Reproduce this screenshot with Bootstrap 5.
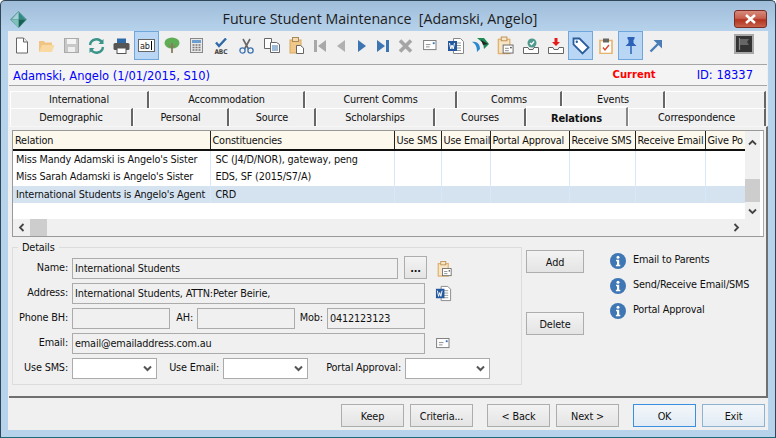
<!DOCTYPE html>
<html lang="en">
<head>
<meta charset="utf-8">
<title>Future Student Maintenance</title>
<link rel="stylesheet" href="https://cdn.jsdelivr.net/npm/bootstrap@5.3.0/dist/css/bootstrap.min.css">
<style>
html,body{margin:0;padding:0;background:#fff;overflow:hidden}
body{font-family:"DejaVu Sans",sans-serif;font-stretch:condensed;font-size:10.8px;letter-spacing:-.16px;line-height:1;color:#111}
.win{width:776px;height:438px;border:1px solid #2e4658;border-bottom-color:#1f6a78;border-radius:5px 5px 0 0;background:linear-gradient(#9fbcd9 0,#b7d3ec 31px);padding:0 7px 7px;box-sizing:border-box}
.ttl{height:30px;position:relative}
.ttl-txt{font-family:"Open Sans",sans-serif;font-stretch:normal;letter-spacing:0;font-size:14.2px;color:#1c1c1c;white-space:pre;padding-top:11px;padding-right:16px}
.ttl-ico{left:2px;top:10px;position:absolute}
.cls{position:absolute;right:1px;top:9px;width:33px;height:18px;border:1px solid #7c2c22;border-radius:3px;background:linear-gradient(#d68a7c 0,#c9604e 45%,#b0341f 55%,#c8624c 100%)}
.client{background:#f0f0f0;height:399px;display:flex;flex-direction:column}
.tbar{height:33px;padding-left:1px}
.tb{width:25px;height:29px;display:flex;align-items:center;justify-content:center;flex:none;margin-top:0;border:1px solid transparent}
.tb-nar{width:21px}
.tb-on{background:#b9d7f4;border-color:#6fa6dc}
.flagbox{margin:3px 14px 0 auto;width:20px;height:20px;border:2px solid #a8a8a8;background:#333;display:flex;align-items:center;justify-content:center}
.nbar{height:22px;margin:0 1px;border:1px solid #a5a5a5;border-width:1px 0;background:#f4f4f4;padding:0 14px 0 4px;font-size:11.5px;font-stretch:normal;letter-spacing:0;color:#0000ff}
.nnm{padding-top:3px}
.nid{padding-top:2px}
.cur{color:#ff0000;font-weight:700;font-size:10px;margin-right:41px}
.tabs{margin:5px 2px 0;flex-wrap:nowrap}
.tabs .nav-item{flex:none;height:100%}
.tabrow1{height:17px}
.tabrow2{height:18px}
.tl{display:block;height:100%;padding:3px 0 0;text-align:center;color:#111;text-decoration:none;background:#f0f0f0;border-top:1px solid #fff;border-left:1px solid #fff;border-right:2px solid #666;border-radius:0}
.tabrow2 .tl{padding-top:4px}
.tl:hover{color:#111}
.tabrow2 .tl-on{font-weight:700;font-size:11px;background:#f0f0f0;border-right-color:#888;margin-top:-1px;height:19px;padding-top:5px;box-shadow:0 -1px 0 #fff}
.pan{height:272px;margin:0 0 0 1px;border:1px solid #888;border-width:1px 2px 2px 0;border-color:#f6f6f6 #707070 #707070 #f6f6f6;padding:3px 2px 0 3px}
.grid{height:107px;border:1px solid #999;border-right-color:#aaa;background:#fff;display:flex}
.gl{width:732px;flex:none;display:flex;flex-direction:column}
.gt{flex:1 1 auto;overflow:hidden;background:#fff}
.gtab{table-layout:fixed;width:745px;margin:0;border-collapse:collapse}
.gtab th,.gtab td{padding:0 0 0 3px;font-weight:400;white-space:nowrap;overflow:hidden;color:#111;background:transparent;box-shadow:none;border:0}
.gtab th{height:19px;background:#fdf8ec;border-right:1px solid #222;border-bottom:2px solid #111;vertical-align:middle;padding-left:2px;padding-top:2px}
.gtab td{height:18px;border-right:1px solid #d9e8f8;vertical-align:middle;padding-top:1px}
.gtab td.cc{padding-left:5px}
.gtab tr.sel td{background:#d5e3f1;height:17px}
.hs{height:17px;background:#f0f0f0;display:flex;align-items:center;flex:none}
.sb-a{width:17px;flex:none;display:flex;align-items:center;justify-content:center}
.hth{width:17px;height:17px;background:#cdcdcd;flex:none}
.vs{width:15px;background:#f0f0f0;flex:none;display:flex;flex-direction:column;align-items:center;margin-right:3px}
.vth{width:15px;height:23px;background:#cdcdcd;margin-top:33px}
.low{display:flex;margin-top:3px}
.fs{width:510px;height:143px;border:1px solid #dcdcdc!important;margin-left:0!important;margin-top:2px!important;padding:0!important}
.fs legend{float:none;width:auto;font-size:inherit;margin:-6px 0 5px 5px;padding:0 4px;line-height:11px;height:11px;display:block}
.fr{display:flex;align-items:center}
.fl{width:55px;text-align:right;margin-right:4px;flex:none;white-space:nowrap}
.fi{height:21px;padding:0 2px;font-size:10.8px;letter-spacing:-.16px;line-height:1;border:1px solid #ababab;border-radius:0;background:#f0f0f0;color:#111;flex:none;font-family:inherit;font-stretch:condensed;box-shadow:none}
.fi:disabled,.fi[readonly]{background:#f0f0f0}
.fsel{height:21px;padding:0;border:1px solid #ababab;border-radius:0;background-color:#fff;background-image:url("data:image/svg+xml,%3Csvg xmlns='http://www.w3.org/2000/svg' viewBox='0 0 9 7'%3E%3Cpath d='M1 1.500L4.500 5 8 1.500' fill='none' stroke='%23555' stroke-width='2'/%3E%3C/svg%3E");background-size:9px 7px;background-position:right 4px center;flex:none;box-shadow:none}
.wbtn{font-size:10.8px;letter-spacing:-.16px;line-height:1;color:#111;border:1px solid #adadad;border-radius:0;background:linear-gradient(#f3f3f3,#e4e4e4);padding:3px 0 0;display:block;font-family:inherit;font-stretch:condensed}
.wbtn:hover{color:#111;border-color:#adadad;background:#e8e8e8}
.side{margin-left:4px;width:58px;flex:none;padding-top:10px}
.info{margin-left:26px;padding-top:8px}
.iline{height:25px;white-space:nowrap}
.iline svg{margin-right:7px}
.foot{height:32px;padding:6px 3px 0 0;gap:6px}
.fb{width:63px;height:23px}
.fb-ok{border-color:#3b8fe0;background:linear-gradient(#f2f6fa,#e2ecf5)}
.fb-ex{border-color:#8fb2cf;background:linear-gradient(#f2f6fa,#e2ecf5)}
.g8{margin-left:8px}
</style>
</head>
<body>
<svg width="0" height="0" class="d-block" aria-hidden="true">
<defs>
<symbol id="env" viewBox="0 0 16 12"><rect x=".5" y=".5" width="13.5" height="10" fill="#fff" stroke="#777"/><path d="M3 5h5M3 7.5h4" stroke="#888"/><rect x="10.5" y="2.5" width="2" height="2" fill="#3d6fb0"/></symbol>
<symbol id="word" viewBox="0 0 18 18"><path d="M6.500 1.500h7l3 3v12h-10z" fill="#fff" stroke="#888"/><path d="M9 6h5M9 8.500h5M9 11h5M9 13.500h5" stroke="#999"/><rect x="1" y="4" width="9" height="10" fill="#23589f"/><path d="M2.500 6l1.300 6 1.200-4 1.200 4 1.300-6" stroke="#fff" fill="none" stroke-width="1"/></symbol>
<symbol id="clipenv" viewBox="0 0 18 20"><rect x="1.500" y="3.500" width="12" height="15" fill="#f6e5c6" stroke="#e0b36f" stroke-width="1.500"/><rect x="4.500" y="1" width="6" height="4" fill="#f6e5c6" stroke="#bb8f55"/><rect x="6.500" y="9.500" width="10.500" height="8.500" fill="#fff" stroke="#666"/><path d="M8.500 13h4M8.500 15.500h4" stroke="#888"/><rect x="14" y="11.500" width="1.500" height="1.500" fill="#333"/></symbol>
<symbol id="inf" viewBox="0 0 16 16"><circle cx="8" cy="8" r="8" fill="#3f76b4"/><circle cx="8" cy="4.200" r="1.500" fill="#fff"/><path d="M6 6.800h3.200v5h1.100v1.400H5.900v-1.400h1.100V8.200H6z" fill="#fff"/></symbol>
</defs>
</svg>
<div class="win">
  <div class="ttl d-flex justify-content-center">
    <svg class="ttl-ico" width="17" height="17" viewBox="0 0 16 16"><path d="M8 0l8 8-8 8-8-8z" fill="#5c9c9c"/><path d="M8 1l6 6.500H8z" fill="#2e8a84"/><path d="M8 16l7-8H8z" fill="#166055"/><path d="M1 8l7 8V8z" fill="#7fc0b8"/><path d="M8 1L2 7.500h6z" fill="#a7cfd8"/></svg>
    <div class="ttl-txt">Future Student Maintenance  [Adamski, Angelo]</div>
    <div class="cls d-flex align-items-center justify-content-center"><svg width="13" height="10" viewBox="0 0 13 10"><path d="M2 1l9 8M11 1L2 9" stroke="#fff" stroke-width="2.500"/></svg></div>
  </div>
  <div class="client">
    <div class="tbar d-flex">
      <div class="tb"><svg width="14" height="17" viewBox="0 0 14 17"><path d="M1.500 1h7l4 4v11h-11z" fill="#fff" stroke="#666"/><path d="M8.500 1v4h4" fill="#eee" stroke="#666"/></svg></div>
      <div class="tb"><svg width="17" height="15" viewBox="0 0 17 15"><path d="M1 3h5l1 1.500h7V14H1z" fill="#f0c483"/><path d="M1 14l3-7h12.500L14 14z" fill="#f9d9a2"/></svg></div>
      <div class="tb"><svg width="15" height="15" viewBox="0 0 15 15"><rect x=".5" y=".5" width="14" height="14" fill="#c8c8c8" stroke="#aaa"/><rect x="3" y="1" width="9" height="5" fill="#f4f4f4"/><rect x="4" y="9" width="7" height="5" fill="#efefef"/></svg></div>
      <div class="tb"><svg width="17" height="16" viewBox="0 0 17 16"><path d="M2 7a6.500 6.500 0 0 1 12-2.500" fill="none" stroke="#3b9489" stroke-width="2.400"/><path d="M15.500 1v5h-5z" fill="#3b9489"/><path d="M15 9a6.500 6.500 0 0 1-12 2.500" fill="none" stroke="#3b9489" stroke-width="2.400"/><path d="M1.500 15v-5h5z" fill="#3b9489"/></svg></div>
      <div class="tb"><svg width="17" height="16" viewBox="0 0 17 16"><rect x="4" y="0.500" width="9" height="5" fill="#2f6aa8"/><rect x="0.500" y="5" width="16" height="7" rx="1.500" fill="#555"/><rect x="4" y="10" width="9" height="5.500" fill="#fff" stroke="#555"/></svg></div>
      <div class="tb tb-on"><svg width="17" height="13" viewBox="0 0 17 13"><rect x=".5" y=".5" width="16" height="12" fill="#fff" stroke="#666"/><text x="2" y="10" font-size="9" font-family="DejaVu Sans" fill="#222">ab</text><path d="M13.500 2v9" stroke="#000"/></svg></div>
      <div class="tb"><svg width="16" height="17" viewBox="0 0 16 17"><ellipse cx="8" cy="6" rx="7.500" ry="5.500" fill="#5fae55"/><path d="M8 6v10" stroke="#8a7a60" stroke-width="1.800"/><path d="M4.500 8l3.500 3 3.500-3" stroke="#8a7a60" fill="none"/></svg></div>
      <div class="tb"><svg width="13" height="15" viewBox="0 0 13 15"><rect x=".5" y=".5" width="12" height="14" fill="#e8e8e8" stroke="#888"/><rect x="2" y="2" width="9" height="3" fill="#6c9fd0"/><path d="M2.500 7h2M5.500 7h2M8.500 7h2M2.500 9.500h2M5.500 9.500h2M8.500 9.500h2M2.500 12h2M5.500 12h2M8.500 12h2" stroke="#777" stroke-width="1.400"/></svg></div>
      <div class="tb"><svg width="15" height="16" viewBox="0 0 15 16"><path d="M2 4.500l3 3.500 7-7.500" fill="none" stroke="#2f6aa8" stroke-width="2.400"/><text x=".5" y="15.500" font-size="6.500" font-weight="700" font-family="DejaVu Sans" fill="#444">ABC</text></svg></div>
      <div class="tb"><svg width="15" height="16" viewBox="0 0 15 16"><path d="M4 1l5.500 10M11 1L5.500 11" stroke="#666" stroke-width="1.600"/><circle cx="3.500" cy="12.500" r="2.600" fill="none" stroke="#3d74b2" stroke-width="1.300"/><circle cx="11.500" cy="12.500" r="2.600" fill="none" stroke="#3d74b2" stroke-width="1.300"/></svg></div>
      <div class="tb"><svg width="16" height="15" viewBox="0 0 16 15"><path d="M.5.500h7v10h-7z" fill="#fff" stroke="#666"/><path d="M6.500 4.500h6l3 2v8h-9z" fill="#fff" stroke="#666"/><path d="M8 8h6M8 10h6M8 12h6" stroke="#3d74b2"/></svg></div>
      <div class="tb"><svg width="16" height="17" viewBox="0 0 16 17"><rect x="1" y="3" width="11" height="13" fill="#f0c98a" stroke="#d8a860"/><rect x="3.500" y=".5" width="6" height="4" fill="#f3dcb2" stroke="#aa8855"/><path d="M7.500 8.500h4l3 2.500v5.500h-7z" fill="#fff" stroke="#666"/></svg></div>
      <div class="tb tb-nar"><svg width="12" height="12" viewBox="0 0 12 12"><rect width="3" height="12" fill="#a8a8a8"/><path d="M12 0v12L4 6z" fill="#a8a8a8"/></svg></div>
      <div class="tb tb-nar"><svg width="8" height="12" viewBox="0 0 8 12"><path d="M8 0v12L0 6z" fill="#b0b0b0"/></svg></div>
      <div class="tb tb-nar"><svg width="8" height="12" viewBox="0 0 8 12"><path d="M0 0v12l8-6z" fill="#3d74b2"/></svg></div>
      <div class="tb tb-nar"><svg width="12" height="12" viewBox="0 0 12 12"><path d="M0 0v12l8-6z" fill="#3d74b2"/><rect x="9" width="3" height="12" fill="#3d74b2"/></svg></div>
      <div class="tb"><svg width="15" height="14" viewBox="0 0 15 14"><path d="M2 1.500l11 11M13 1.500l-11 11" stroke="#a5a5a5" stroke-width="3.600"/></svg></div>
      <div class="tb"><svg width="15" height="11"><use href="#env"/></svg></div>
      <div class="tb"><svg width="18" height="18"><use href="#word"/></svg></div>
      <div class="tb"><svg width="17" height="15" viewBox="0 0 17 15"><path d="M0 4c5-1 8 2 8 7l-3 3c0-5-1-8-5-10z" fill="#2a8ad0"/><path d="M5 0h7l5 6-5 5-1-6z" fill="#1f8a55"/><path d="M9 2l7 4-5 1z" fill="#222"/></svg></div>
      <div class="tb"><svg width="17" height="19"><use href="#clipenv"/></svg></div>
      <div class="tb"><svg width="16" height="16" viewBox="0 0 16 16"><circle cx="9" cy="5" r="4.500" fill="#4f9a8e"/><path d="M7 5l1.500 1.500L11 3.500" stroke="#fff" fill="none" stroke-width="1.300"/><path d="M.5 9.500h4.500l1 2h4l1-2h4.500v6H.500z" fill="#fff" stroke="#666"/></svg></div>
      <div class="tb"><svg width="16" height="16" viewBox="0 0 16 16"><path d="M6.500 0h3v4h2.500l-4 4-4-4h2.500z" fill="#e31b1b"/><path d="M.5 9.500h4.500l1 2h4l1-2h4.500v6H.500z" fill="#fff" stroke="#666"/></svg></div>
      <div class="tb tb-on"><svg width="18" height="18" viewBox="0 0 18 18"><path d="M1.500 1.500h6l9 9-6 6-9-9z" fill="#fff" stroke="#2a5d9c" stroke-width="1.800"/><circle cx="4.800" cy="4.800" r="1.200" fill="#2a5d9c"/></svg></div>
      <div class="tb"><svg width="14" height="16" viewBox="0 0 14 16"><rect x="1" y="2.500" width="12" height="13" fill="#fff" stroke="#e5b56f" stroke-width="1.600"/><rect x="4" y=".5" width="6" height="4" fill="#666"/><path d="M4 9.500l2 2.500 4-5" stroke="#d9442b" fill="none" stroke-width="1.400"/></svg></div>
      <div class="tb tb-on"><svg width="12" height="17" viewBox="0 0 12 17"><path d="M2.500 0h7v2l-1 1v3l3 3H.5l3-3V3l-1-1z" fill="#2d62b8"/><path d="M6 9v8" stroke="#2d62b8" stroke-width="1.500"/></svg></div>
      <div class="tb"><svg width="14" height="14" viewBox="0 0 14 14"><path d="M1.500 12.500L11 3" stroke="#4a7db5" stroke-width="2.400"/><path d="M4.500 1H13v8.500z" fill="#4a7db5"/></svg></div>
      <div class="flagbox"><svg width="12" height="12" viewBox="0 0 12 12"><path d="M1.500 0v12" stroke="#888" stroke-width="1.200"/><path d="M2 1h9l-2 3 2 3H2z" fill="#666"/></svg></div>
    </div>
    <div class="nbar d-flex align-items-center"><span class="flex-grow-1 nnm">Adamski, Angelo (1/01/2015, S10)</span><span class="cur">Current</span><span class="nid">ID: 18337</span></div>

    <ul class="nav tabs tabrow1">
      <li class="nav-item"><a class="tl" style="width:139px">International</a></li>
      <li class="nav-item"><a class="tl" style="width:156px">Accommodation</a></li>
      <li class="nav-item"><a class="tl" style="width:152px">Current Comms</a></li>
      <li class="nav-item"><a class="tl" style="width:105px">Comms</a></li>
      <li class="nav-item"><a class="tl" style="width:103px">Events</a></li>
      <li class="nav-item"><a class="tl" style="width:101px">&nbsp;</a></li>
    </ul>
    <ul class="nav tabs tabrow2 mt-0">
      <li class="nav-item"><a class="tl" style="width:123px">Demographic</a></li>
      <li class="nav-item"><a class="tl" style="width:96px">Personal</a></li>
      <li class="nav-item"><a class="tl" style="width:87px">Source</a></li>
      <li class="nav-item"><a class="tl" style="width:119px">Scholarships</a></li>
      <li class="nav-item"><a class="tl" style="width:91px">Courses</a></li>
      <li class="nav-item"><a class="tl tl-on" style="width:102px">Relations</a></li>
      <li class="nav-item"><a class="tl" style="width:138px">Correspondence</a></li>
    </ul>

    <div class="pan">
      <div class="grid">
        <div class="gl">
          <div class="gt">
            <table class="table gtab">
              <colgroup><col style="width:197px"><col style="width:184px"><col style="width:47px"><col style="width:49px"><col style="width:79px"><col style="width:66px"><col style="width:70px"><col style="width:53px"></colgroup>
              <thead><tr><th>Relation</th><th>Constituencies</th><th>Use SMS</th><th>Use Email</th><th>Portal Approval</th><th>Receive SMS</th><th>Receive Email</th><th>Give Po</th></tr></thead>
              <tbody>
                <tr><td>Miss Mandy Adamski is Angelo's Sister</td><td class="cc">SC (J4/D/NOR), gateway, peng</td><td></td><td></td><td></td><td></td><td></td><td></td></tr>
                <tr><td>Miss Sarah Adamski is Angelo's Sister</td><td class="cc">EDS, SF (2015/S7/A)</td><td></td><td></td><td></td><td></td><td></td><td></td></tr>
                <tr class="sel"><td>International Students is Angelo's Agent</td><td class="cc">CRD</td><td></td><td></td><td></td><td></td><td></td><td></td></tr>
              </tbody>
            </table>
          </div>
          <div class="hs">
            <div class="sb-a"><svg width="7" height="9" viewBox="0 0 7 9"><path d="M5.500 1L2 4.500 5.500 8" fill="none" stroke="#444" stroke-width="1.800"/></svg></div>
            <div class="hth"></div>
            <div class="sb-a ms-auto"><svg width="7" height="9" viewBox="0 0 7 9"><path d="M1.500 1L5 4.500 1.500 8" fill="none" stroke="#444" stroke-width="1.800"/></svg></div>
          </div>
        </div>
        <div class="vs">
          <svg class="mt-2" width="9" height="7" viewBox="0 0 9 7"><path d="M1 5.500L4.500 2 8 5.500" fill="none" stroke="#444" stroke-width="1.800"/></svg>
          <div class="vth"></div>
          <svg style="margin-top:6px" width="9" height="7" viewBox="0 0 9 7"><path d="M1 1.500L4.500 5 8 1.500" fill="none" stroke="#444" stroke-width="1.800"/></svg>
        </div>
      </div>

      <div class="low">
        <fieldset class="fs">
          <legend>Details</legend>
          <div class="fr"><span class="fl">Name:</span><input class="form-control fi" style="width:326px" value="International Students" readonly><button type="button" class="btn wbtn" style="width:23px;height:23px;font-weight:700;margin-left:6px;margin-top:-2px">...</button><svg style="margin-left:10px" width="15" height="18"><use href="#clipenv"/></svg></div>
          <div class="fr" style="margin-top:4px"><span class="fl">Address:</span><input class="form-control fi" style="width:353px" value="International Students, ATTN:Peter Beirie," readonly><svg style="margin-left:10px" width="17" height="17"><use href="#word"/></svg></div>
          <div class="fr" style="margin-top:4px"><span class="fl">Phone BH:</span><input class="form-control fi" style="width:98px" readonly><span style="width:27px;text-align:right;padding-right:4px">AH:</span><input class="form-control fi" style="width:98px" readonly><span style="width:32px;text-align:right;padding-right:4px">Mob:</span><input class="form-control fi" style="width:98px" value="0412123123" readonly></div>
          <div class="fr" style="margin-top:4px"><span class="fl">Email:</span><input class="form-control fi" style="width:353px" value="email@emailaddress.com.au" readonly><svg style="margin-left:11px" width="15" height="11"><use href="#env"/></svg></div>
          <div class="fr" style="margin-top:4px"><span class="fl">Use SMS:</span><select class="form-select fsel" style="width:85px"><option></option></select><span style="width:66px;text-align:right;padding-right:4px">Use Email:</span><select class="form-select fsel" style="width:85px"><option></option></select><span style="width:97px;text-align:right;padding-right:4px">Portal Approval:</span><select class="form-select fsel" style="width:85px"><option></option></select></div>
        </fieldset>
        <div class="side">
          <button type="button" class="btn wbtn w-100" style="height:23px">Add</button>
          <button type="button" class="btn wbtn w-100" style="height:23px;margin-top:39px">Delete</button>
        </div>
        <div class="info">
          <div class="iline d-flex align-items-center"><svg width="16" height="16"><use href="#inf"/></svg>Email to Parents</div>
          <div class="iline d-flex align-items-center"><svg width="16" height="16"><use href="#inf"/></svg>Send/Receive Email/SMS</div>
          <div class="iline d-flex align-items-center"><svg width="16" height="16"><use href="#inf"/></svg>Portal Approval</div>
        </div>
      </div>
    </div>

    <div class="foot d-flex justify-content-end">
      <button type="button" class="btn wbtn fb">Keep</button>
      <button type="button" class="btn wbtn fb">Criteria...</button>
      <button type="button" class="btn wbtn fb g8">&lt; Back</button>
      <button type="button" class="btn wbtn fb">Next &gt;</button>
      <button type="button" class="btn wbtn fb fb-ok g8">OK</button>
      <button type="button" class="btn wbtn fb fb-ex">Exit</button>
    </div>
  </div>
</div>
<script src="https://cdn.jsdelivr.net/npm/bootstrap@5.3.0/dist/js/bootstrap.bundle.min.js"></script>
</body>
</html>
